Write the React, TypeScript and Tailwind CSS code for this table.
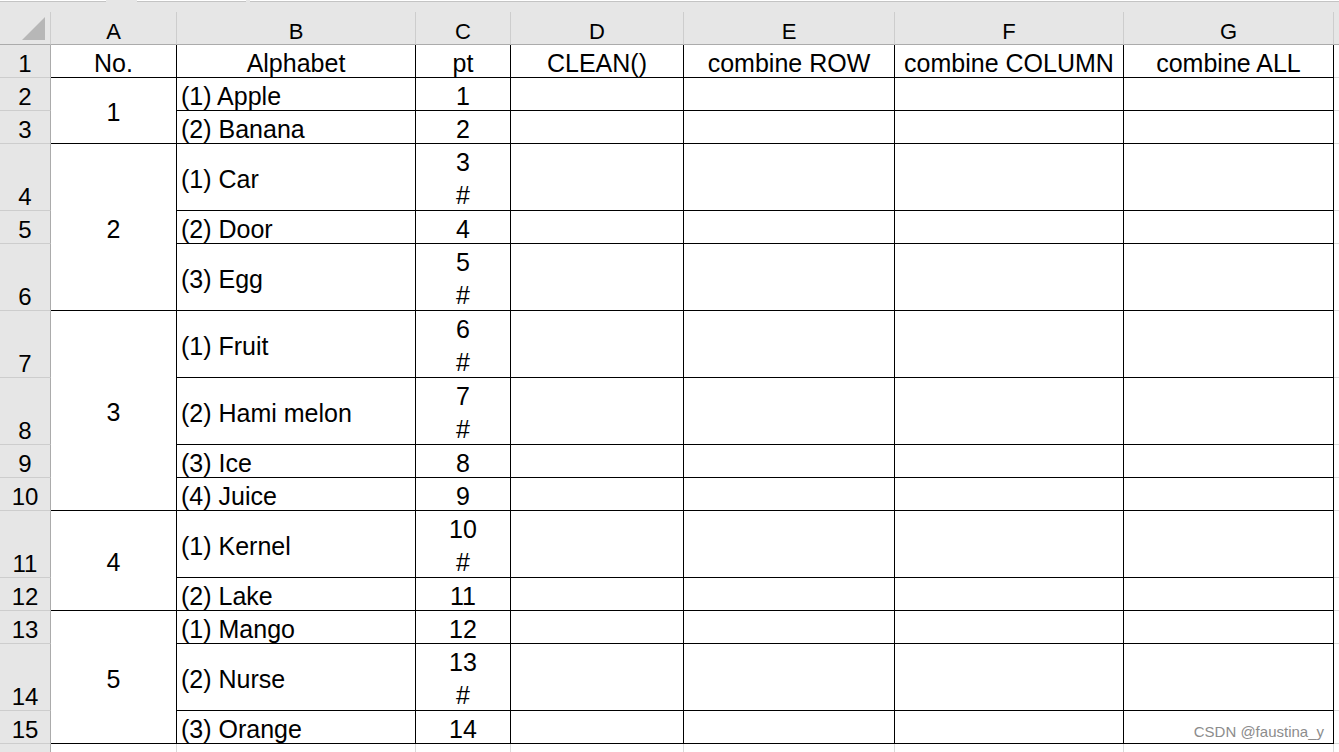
import type { FC } from 'react';

type Row = { n: number; b: string; c: string[] };

const ROWS: Row[] = [
  { n: 2, b: '(1) Apple', c: ['1'] },
  { n: 3, b: '(2) Banana', c: ['2'] },
  { n: 4, b: '(1) Car', c: ['3', '#'] },
  { n: 5, b: '(2) Door', c: ['4'] },
  { n: 6, b: '(3) Egg', c: ['5', '#'] },
  { n: 7, b: '(1) Fruit', c: ['6', '#'] },
  { n: 8, b: '(2) Hami melon', c: ['7', '#'] },
  { n: 9, b: '(3) Ice', c: ['8'] },
  { n: 10, b: '(4) Juice', c: ['9'] },
  { n: 11, b: '(1) Kernel', c: ['10', '#'] },
  { n: 12, b: '(2) Lake', c: ['11'] },
  { n: 13, b: '(1) Mango', c: ['12'] },
  { n: 14, b: '(2) Nurse', c: ['13', '#'] },
  { n: 15, b: '(3) Orange', c: ['14'] },
];

// merged cells in column A, keyed by first row
const MERGED: Record<number, { value: string; span: string }> = {
  2: { value: '1', span: 'row-span-2' },
  4: { value: '2', span: 'row-span-3' },
  7: { value: '3', span: 'row-span-4' },
  11: { value: '4', span: 'row-span-2' },
  13: { value: '5', span: 'row-span-3' },
};

const LETTERS = ['A', 'B', 'C', 'D', 'E', 'F', 'G'];
const TITLES = ['No.', 'Alphabet', 'pt', 'CLEAN()', 'combine ROW', 'combine COLUMN', 'combine ALL'];

const rowHead =
  'flex items-end justify-center bg-[#e6e6e6] border-r border-b border-r-[#ababab] border-b-[#cdcdcd] text-[24px] leading-[27px]';
const cell = 'bg-white border-r border-b border-black';
const centered = `${cell} flex items-center justify-center pt-[4px] leading-[33px]`;
const extra = 'bg-white border-b border-[#d9d9d9]';

const RowHeader: FC<{ n?: number }> = ({ n }) => <div className={rowHead}>{n}</div>;

const App: FC = () => {
  return (
    <div className="relative h-[752px] w-[1339px] overflow-hidden bg-white font-['Liberation_Sans',Arial,sans-serif] text-[25px] text-black">
      {/* strip above the column letters */}
      <div className="flex h-[12px] items-start gap-[4px] bg-[#e6e6e6]">
        <div className="h-[2px] w-[106px] border-b border-[#c4c4c4] bg-white" />
        <div className="ml-[27px] h-[2px] w-[109px] border-b border-[#c4c4c4] bg-white" />
        <div className="h-[2px] flex-1 border-b border-[#c4c4c4] bg-white" />
      </div>

      <div className="grid grid-cols-[51px_126px_239px_95px_173px_211px_229px_210px_40px] grid-rows-[33px_33px_33px_33px_67px_33px_67px_67px_67px_33px_33px_67px_33px_33px_67px_33px_33px]">
        {/* column letters */}
        <div className="relative border-r border-b border-r-[#cdcdcd] border-b-[#ababab] bg-[#e6e6e6]">
          <svg className="absolute left-[22px] top-[5px]" width="24" height="24" viewBox="0 0 24 24">
            <polygon points="0,23 23,23 23,0" fill="#b7b7b7" />
          </svg>
        </div>
        {LETTERS.map((l) => (
          <div
            key={l}
            className="flex items-center justify-center border-r border-b border-r-[#cdcdcd] border-b-[#ababab] bg-[#e6e6e6] pt-[8px] text-[22px] leading-[32px]"
          >
            {l}
          </div>
        ))}
        <div className="border-b border-[#ababab] bg-[#e6e6e6]" />

        {/* row 1: titles */}
        <RowHeader n={1} />
        {TITLES.map((t) => (
          <div key={t} className={centered}>
            {t}
          </div>
        ))}
        <div className={extra} />

        {ROWS.map((r) => {
          const m = MERGED[r.n];
          return [
            <RowHeader key={`h${r.n}`} n={r.n} />,
            m && (
              <div key={`a${r.n}`} className={`${centered} ${m.span}`}>
                {m.value}
              </div>
            ),
            <div key={`b${r.n}`} className={`${cell} flex items-center pl-[4px] pt-[4px] leading-[33px]`}>
              {r.b}
            </div>,
            <div key={`c${r.n}`} className={`${cell} flex flex-col items-center justify-center pt-[4px] leading-[33px]`}>
              {r.c.map((v, i) => (
                <span key={i}>{v}</span>
              ))}
            </div>,
            <div key={`d${r.n}`} className={cell} />,
            <div key={`e${r.n}`} className={cell} />,
            <div key={`f${r.n}`} className={cell} />,
            <div key={`g${r.n}`} className={cell} />,
            <div key={`x${r.n}`} className={extra} />,
          ];
        })}

        {/* row 16, cut off below the window; its label is not visible */}
        <RowHeader />
        {LETTERS.map((l) => (
          <div key={`r16${l}`} className="border-r border-[#d9d9d9] bg-white" />
        ))}
        <div className="bg-white" />
      </div>

      <div className="absolute right-[15px] top-[723px] text-[15px] leading-[18px] text-[#8c8c8c]">
        CSDN @faustina_y
      </div>
    </div>
  );
};

export default App;
